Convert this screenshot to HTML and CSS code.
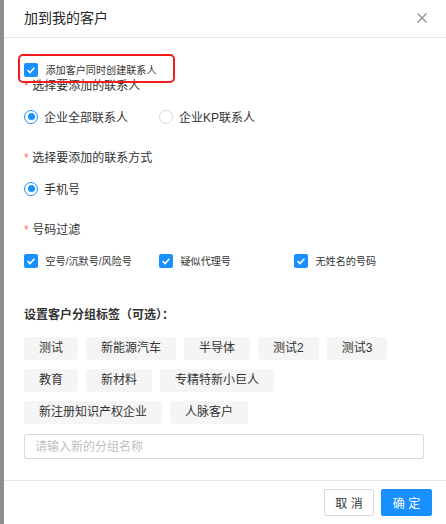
FILE: index.html
```html
<!DOCTYPE html>
<html lang="zh-CN">
<head>
<meta charset="utf-8">
<title>加到我的客户</title>
<link rel="stylesheet" href="styles.css">
</head>
<body>
<div class="page">
  <div class="backdrop"></div>
  <div class="dialog">
    <div class="dialog-header">
      <span class="dialog-title">加到我的客户</span>
      <svg class="close" width="10" height="10" viewBox="0 0 10 10"><path d="M0.5 0.5 L9.5 9.5 M9.5 0.5 L0.5 9.5" stroke="#8c8c8c" stroke-width="1.2" fill="none"/></svg>
    </div>
    <div class="dialog-body">
      <div class="create-row">
        <span class="annot"></span>
        <span class="checkbox"><svg width="14" height="14" viewBox="0 0 14 14"><polyline points="3.6,7.2 6,9.5 10.4,4.8" stroke="#fff" stroke-width="1.6" fill="none"/></svg></span>
        <span class="small-label">添加客户同时创建联系人</span>
      </div>
      <div class="field-label first"><span class="req">*</span>选择要添加的联系人</div>
      <div class="control-row">
        <label class="radio-item"><span class="radio checked"></span><span>企业全部联系人</span></label>
        <label class="radio-item"><span class="radio"></span><span>企业KP联系人</span></label>
      </div>
      <div class="field-label"><span class="req">*</span>选择要添加的联系方式</div>
      <div class="control-row">
        <label class="radio-item"><span class="radio checked"></span><span>手机号</span></label>
      </div>
      <div class="field-label"><span class="req">*</span>号码过滤</div>
      <div class="control-row check-grid">
        <label class="check-item"><span class="checkbox"><svg width="14" height="14" viewBox="0 0 14 14"><polyline points="3.6,7.2 6,9.5 10.4,4.8" stroke="#fff" stroke-width="1.6" fill="none"/></svg></span><span class="small-label">空号/沉默号/风险号</span></label>
        <label class="check-item"><span class="checkbox"><svg width="14" height="14" viewBox="0 0 14 14"><polyline points="3.6,7.2 6,9.5 10.4,4.8" stroke="#fff" stroke-width="1.6" fill="none"/></svg></span><span class="small-label">疑似代理号</span></label>
        <label class="check-item"><span class="checkbox"><svg width="14" height="14" viewBox="0 0 14 14"><polyline points="3.6,7.2 6,9.5 10.4,4.8" stroke="#fff" stroke-width="1.6" fill="none"/></svg></span><span class="small-label">无姓名的号码</span></label>
      </div>
      <div class="group-title">设置客户分组标签（可选）：</div>
      <div class="tags">
        <span class="tag">测试</span>
        <span class="tag">新能源汽车</span>
        <span class="tag">半导体</span>
        <span class="tag">测试2</span>
        <span class="tag">测试3</span>
        <span class="tag">教育</span>
        <span class="tag">新材料</span>
        <span class="tag">专精特新小巨人</span>
        <span class="tag">新注册知识产权企业</span>
        <span class="tag">人脉客户</span>
      </div>
      <input class="group-input" type="text" placeholder="请输入新的分组名称">
    </div>
    <div class="dialog-footer">
      <button class="btn">取 消</button>
      <button class="btn primary">确 定</button>
    </div>
  </div>
</div>
</body>
</html>
```
FILE: styles.css
```css
* { box-sizing: border-box; }
html, body { margin: 0; padding: 0; }
body {
  font-family: "Liberation Sans", "Noto Sans CJK SC", sans-serif;
  color: #333;
  background: #fff;
}
.page {
  width: 446px;
  height: 524px;
  display: flex;
  overflow: hidden;
}
.backdrop {
  width: 4px;
  background: #8e8e8e;
  flex-shrink: 0;
}
.dialog {
  flex: 1;
  background: #fff;
  display: flex;
  flex-direction: column;
}
.dialog-header {
  height: 39px;
  border-bottom: 1px solid #e9e9e9;
  display: flex;
  align-items: center;
  justify-content: space-between;
  padding: 0 19px 3px 20px;
}
.dialog-title {
  font-size: 14px;
  font-weight: 400;
  color: #262626;
}
.close { display: block; margin-top: 2px; }
.dialog-body {
  padding: 23.5px 22px 21px 20px;
}
.create-row {
  position: relative;
  display: flex;
  align-items: center;
  height: 16px;
  gap: 7.5px;
}
.annot {
  position: absolute;
  left: -6.5px;
  top: -7.5px;
  width: 157px;
  height: 28.5px;
  border: 2.5px solid #f41d1d;
  border-radius: 5px;
  pointer-events: none;
}
.checkbox {
  width: 14px;
  height: 14px;
  border-radius: 2px;
  background: #1890ff;
  display: inline-flex;
  flex-shrink: 0;
}
.checkbox svg { display: block; }
.small-label {
  font-size: 10.1px;
  color: #333;
  white-space: nowrap;
}
.field-label {
  font-size: 12px;
  line-height: 16px;
  height: 16px;
  margin-top: 23px;
  color: #333;
}
.field-label.first { margin-top: 0; }
.req {
  color: #ff6b6b;
  margin-right: 3.5px;
  font-family: "Liberation Sans", sans-serif;
}
.control-row {
  margin-top: 13px;
  height: 20px;
  display: flex;
  align-items: center;
}
.radio-item {
  display: flex;
  align-items: center;
  gap: 6px;
  font-size: 12px;
  margin-right: 31px;
  color: #333;
}
.radio {
  width: 14px;
  height: 14px;
  border-radius: 50%;
  border: 1px solid #d9d9d9;
  display: inline-flex;
  align-items: center;
  justify-content: center;
  flex-shrink: 0;
}
.radio.checked { border-color: #1890ff; }
.radio.checked::after {
  content: "";
  width: 7px;
  height: 7px;
  border-radius: 50%;
  background: #1890ff;
}
.check-grid {
  display: grid;
  grid-template-columns: 135px 135px 1fr;
}
.check-item {
  display: flex;
  align-items: center;
  gap: 7.5px;
}
.group-title {
  margin-top: 36px;
  font-size: 12px;
  line-height: 16px;
  font-weight: 600;
  color: #333;
}
.tags {
  margin-top: 14.3px;
  display: flex;
  flex-wrap: wrap;
}
.tag {
  height: 23px;
  line-height: 23px;
  padding: 0 15px;
  margin: 0 8px 9px 0;
  background: #f5f5f5;
  border-radius: 3px;
  font-size: 12px;
  color: #333;
  white-space: nowrap;
}
.group-input {
  display: block;
  width: 400px;
  height: 25px;
  margin-top: 1px;
  border: 1px solid #d9d9d9;
  border-radius: 2px;
  padding: 0 10px;
  font-family: "Liberation Sans", "Noto Sans CJK SC", sans-serif;
  font-size: 12px;
  color: #333;
  outline: none;
}
.group-input::placeholder { color: #bfbfbf; }
.dialog-footer {
  border-top: 1px solid #e9e9e9;
  padding: 8px 14px 8px 0;
  display: flex;
  justify-content: flex-end;
  gap: 7px;
}
.btn {
  height: 27px;
  width: 50px;
  border: 1px solid #d9d9d9;
  border-radius: 2px;
  background: #fff;
  font-family: "Liberation Sans", "Noto Sans CJK SC", sans-serif;
  font-size: 12px;
  color: #333;
  padding: 0;
}
.btn.primary {
  width: 51px;
  background: #1890ff;
  border-color: #1890ff;
  color: #fff;
}
```
